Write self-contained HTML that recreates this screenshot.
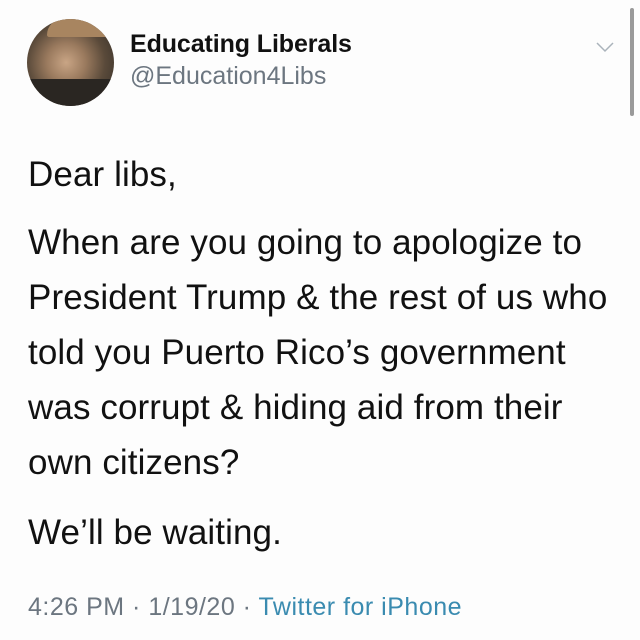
<!DOCTYPE html>
<html><head><style>
body{margin:0;width:640px;height:640px;background:#fdfdfd;font-family:"Liberation Sans",Arial,sans-serif;color:#111;position:relative;overflow:hidden}
.a{position:absolute;white-space:nowrap}
.t{font-size:35px;letter-spacing:0.1px;left:28px}
</style></head><body>
<div class="a" style="left:27px;top:19px;width:87px;height:87px;border-radius:50%;background:radial-gradient(circle at 45% 50%,#c9a585 0,#9a7a5e 30%,#5a4a3a 60%,#2e2a26 100%);overflow:hidden">
<div style="position:absolute;left:20px;top:0;width:60px;height:18px;background:#a88560;border-radius:30px 30px 4px 4px"></div>
<div style="position:absolute;left:0;top:60px;width:87px;height:30px;background:#2a2622"></div>
</div>
<div class="a" style="left:130px;top:30px;font-size:25px;font-weight:bold;letter-spacing:-0.1px">Educating Liberals</div>
<div class="a" style="left:130px;top:62px;font-size:25px;color:#6c7680;letter-spacing:0px">@Education4Libs</div>
<svg class="a" style="left:595px;top:41px" width="20" height="12"><path d="M2 2 L10 10 L18 2" fill="none" stroke="#aab3bb" stroke-width="1.5"/></svg>
<div class="a" style="left:630px;top:8px;width:4px;height:108px;background:#9a9a9a;border-radius:2px"></div>
<div class="a t" style="top:155px">Dear libs,</div>
<div class="a t" style="top:223px">When are you going to apologize to</div>
<div class="a t" style="top:278px">President Trump &amp; the rest of us who</div>
<div class="a t" style="top:333px">told you Puerto Rico’s government</div>
<div class="a t" style="top:388px">was corrupt &amp; hiding aid from their</div>
<div class="a t" style="top:443px">own citizens?</div>
<div class="a t" style="top:513px">We’ll be waiting.</div>
<div class="a" style="left:28px;top:593px;font-size:25px;color:#6c7680;letter-spacing:0.5px">4:26 PM · 1/19/20 · <span style="color:#3a8bb0">Twitter for iPhone</span></div>
</body></html>
